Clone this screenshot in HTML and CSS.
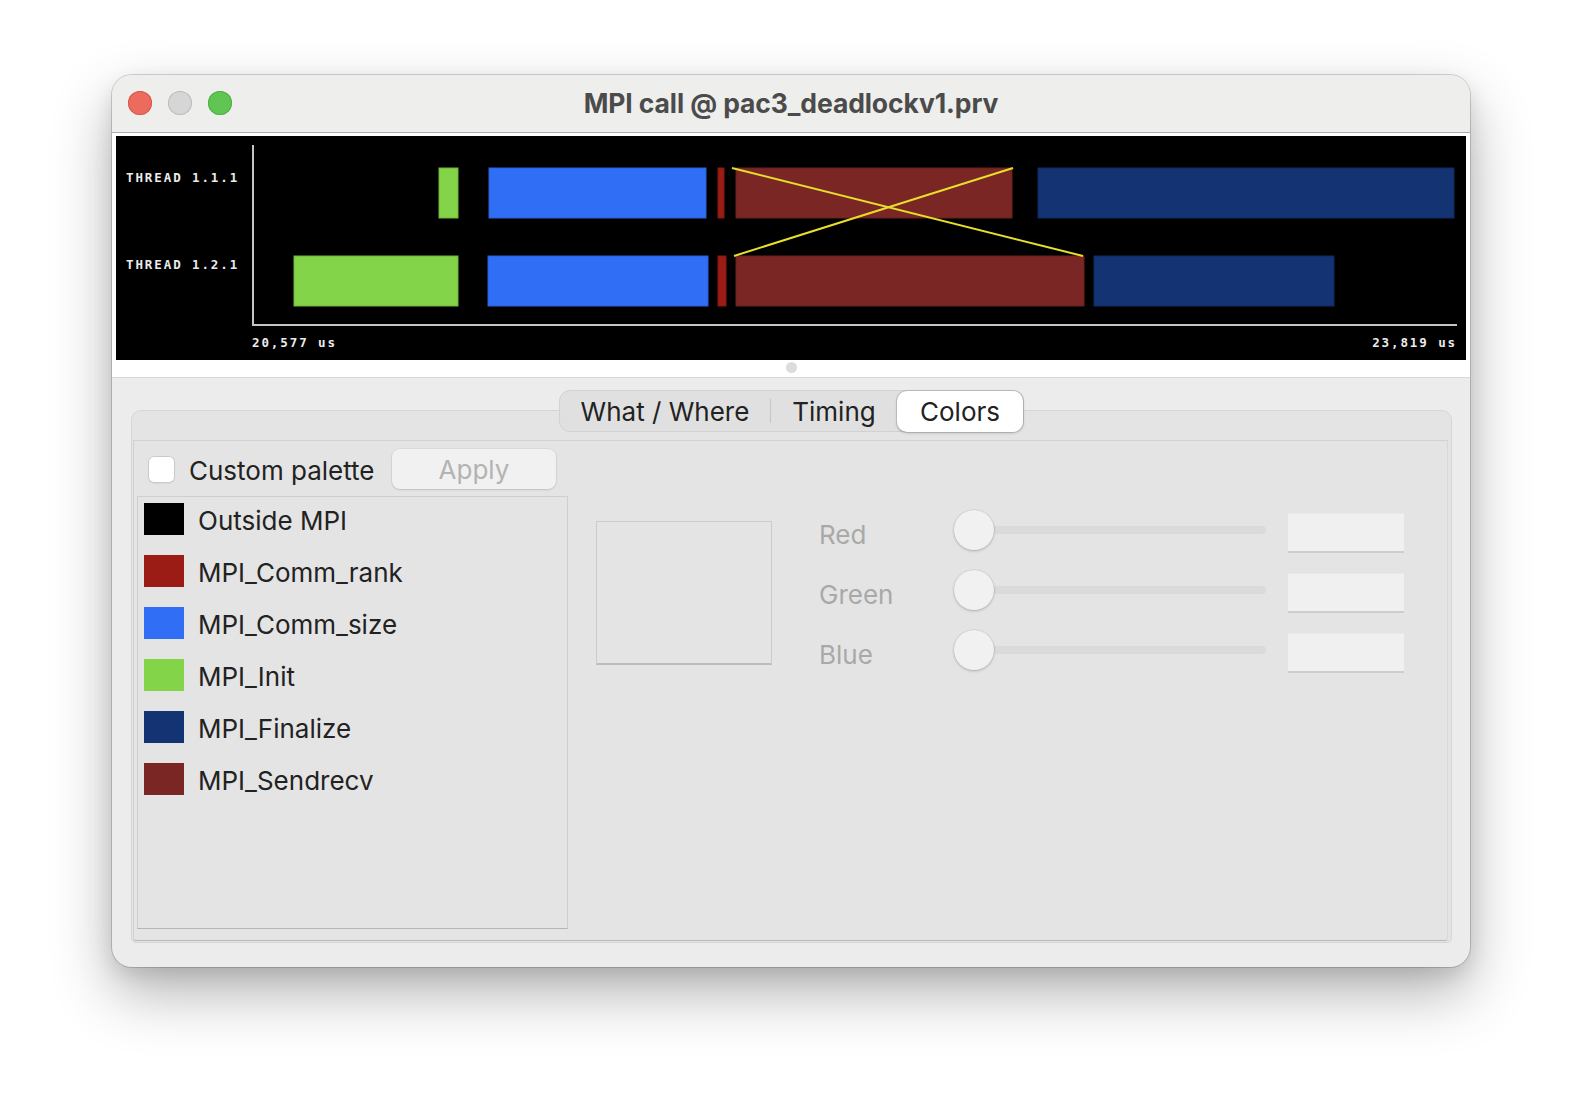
FILE: index.html
```html
<!DOCTYPE html>
<html>
<head>
<meta charset="utf-8">
<title>MPI call @ pac3_deadlockv1.prv</title>
<link rel="stylesheet" href="styles.css">
</head>
<body>
<div class="stage">
  <div class="window">
    <div class="titlebar">
      <div class="lights">
        <span class="light red"></span>
        <span class="light gray"></span>
        <span class="light green"></span>
      </div>
      <div class="title">MPI call @ pac3_deadlockv1.prv</div>
      <div></div>
    </div>

    <div class="canvas-wrap">
      <svg class="timeline" width="1350" height="224" viewBox="0 0 1350 224">
        <rect x="0" y="0" width="1350" height="224" fill="#000"/>
        <text class="tl-label" x="10" y="46">THREAD 1.1.1</text>
        <text class="tl-label" x="10" y="133">THREAD 1.2.1</text>
        <line x1="137" y1="9" x2="137" y2="190" stroke="#c4c4c4" stroke-width="2"/>
        <line x1="136" y1="189" x2="1341" y2="189" stroke="#c4c4c4" stroke-width="2"/>

        <rect class="b-init" x="323" y="32" width="19" height="50"/>
        <rect class="b-size" x="373" y="32" width="217" height="50"/>
        <rect class="b-rank" x="602" y="32" width="6" height="50"/>
        <rect class="b-send" x="620" y="32" width="276" height="50"/>
        <rect class="b-fin" x="922" y="32" width="416" height="50"/>

        <rect class="b-init" x="178" y="120" width="164" height="50"/>
        <rect class="b-size" x="372" y="120" width="220" height="50"/>
        <rect class="b-rank" x="602" y="120" width="8" height="50"/>
        <rect class="b-send" x="620" y="120" width="348" height="50"/>
        <rect class="b-fin" x="978" y="120" width="240" height="50"/>

        <line x1="616" y1="32" x2="967" y2="120" stroke="#e6df2c" stroke-width="2"/>
        <line x1="897" y1="32" x2="618" y2="120" stroke="#e6df2c" stroke-width="2"/>

        <text class="tl-label" x="136" y="211">20,577 us</text>
        <text class="tl-label" x="1341" y="211" text-anchor="end">23,819 us</text>
      </svg>
    </div>

    <div class="sash"><span class="grip"></span></div>

    <div class="panel">
      <div class="tabs">
        <div class="seg seg-what">What / Where</div>
        <div class="sep"></div>
        <div class="seg seg-timing">Timing</div>
        <div class="seg seg-colors active">Colors</div>
      </div>
      <div class="groupbox">
        <div class="page">
          <div class="left">
            <div class="palette-row">
              <span class="checkbox"></span>
              <span class="palette-label">Custom palette</span>
              <span class="apply">Apply</span>
            </div>
            <div class="list">
              <div class="item"><span class="swatch sw-out"></span><span class="item-name">Outside MPI</span></div>
              <div class="item"><span class="swatch sw-rank"></span><span class="item-name">MPI_Comm_rank</span></div>
              <div class="item"><span class="swatch sw-size"></span><span class="item-name">MPI_Comm_size</span></div>
              <div class="item"><span class="swatch sw-init"></span><span class="item-name">MPI_Init</span></div>
              <div class="item"><span class="swatch sw-fin"></span><span class="item-name">MPI_Finalize</span></div>
              <div class="item"><span class="swatch sw-send"></span><span class="item-name">MPI_Sendrecv</span></div>
            </div>
          </div>
          <div class="editor">
            <div class="preview"></div>
            <div class="sliders">
              <div class="srow">
                <span class="slabel">Red</span>
                <div class="slider"><span class="knob"></span></div>
                <span class="field"></span>
              </div>
              <div class="srow">
                <span class="slabel">Green</span>
                <div class="slider"><span class="knob"></span></div>
                <span class="field"></span>
              </div>
              <div class="srow">
                <span class="slabel">Blue</span>
                <div class="slider"><span class="knob"></span></div>
                <span class="field"></span>
              </div>
            </div>
          </div>
        </div>
      </div>
    </div>
  </div>
</div>
</body>
</html>
```

FILE: styles.css
```css
* { box-sizing: border-box; }
html, body { margin: 0; padding: 0; background: #ffffff; }
body {
  font-family: "Inter", "Noto Sans", "Liberation Sans", sans-serif;
  width: 1582px;
  height: 1116px;
  overflow: hidden;
}
.stage {
  padding: 75px 0 0 112px;
}
.window {
  width: 1358px;
  height: 892px;
  border-radius: 20px;
  overflow: hidden;
  background: #ececec;
  box-shadow: 0 0 0 1px rgba(0,0,0,0.16), 0 26px 60px rgba(0,0,0,0.30), 0 8px 20px rgba(0,0,0,0.10);
  display: flex;
  flex-direction: column;
}

/* title bar */
.titlebar {
  height: 58px;
  flex: 0 0 58px;
  background: #eeeeed;
  border-bottom: 1px solid #acacac;
  display: grid;
  grid-template-columns: 1fr auto 1fr;
  align-items: center;
}
.lights {
  display: flex;
  gap: 16px;
  padding-left: 16px;
  padding-bottom: 1px;
}
.light {
  width: 24px;
  height: 24px;
  border-radius: 50%;
  display: block;
}
.light.red { background: #ec6a5e; box-shadow: inset 0 0 0 1px #d65a4f; }
.light.gray { background: #d6d6d6; box-shadow: inset 0 0 0 1px #bdbdbd; }
.light.green { background: #61c554; box-shadow: inset 0 0 0 1px #52ad46; }
.title {
  font-size: 26.5px;
  font-weight: 700;
  color: #4b4b4b;
  letter-spacing: -0.1px;
  padding-bottom: 2px;
}

/* canvas */
.canvas-wrap {
  background: #ffffff;
  padding: 3px 4px 0 4px;
  line-height: 0;
}
.timeline { display: block; }
.tl-label {
  font-family: "DejaVu Sans Mono", "Liberation Mono", monospace;
  font-weight: 700;
  font-size: 12.5px;
  letter-spacing: 1.9px;
  fill: #ececec;
}
.b-init { fill: #84d44a; stroke: #6fb53c; stroke-width: 1; }
.b-size { fill: #306ff5; stroke: #2a61d6; stroke-width: 1; }
.b-rank { fill: #9b1c14; stroke: #861810; stroke-width: 1; }
.b-send { fill: #792624; stroke: #6a2120; stroke-width: 1; }
.b-fin { fill: #133372; stroke: #0f2b63; stroke-width: 1; }

/* sash */
.sash {
  height: 18px;
  flex: 0 0 18px;
  background: #ffffff;
  border-bottom: 1px solid #d9d9d9;
  display: flex;
  justify-content: center;
  align-items: flex-start;
  padding-top: 2px;
}
.grip {
  width: 11px;
  height: 11px;
  border-radius: 50%;
  background: #dcdcdc;
  display: block;
}

/* panel */
.panel {
  flex: 1;
  padding: 12px 18px 23px 19px;
  display: flex;
  flex-direction: column;
}
.tabs {
  align-self: center;
  height: 42px;
  display: flex;
  align-items: center;
  background: #e0e0e0;
  border: 1px solid #d2d2d2;
  border-radius: 11px;
  position: relative;
  z-index: 1;
  font-size: 26px;
  color: #222222;
}
.seg {
  height: 40px;
  display: flex;
  align-items: center;
  justify-content: center;
}
.seg-what { width: 210px; }
.seg-timing { width: 126px; }
.seg-colors { width: 126px; }
.sep {
  width: 1px;
  height: 24px;
  background: #c6c6c6;
}
.seg.active {
  background: #ffffff;
  border-radius: 10px;
  height: 41px;
  box-shadow: 0 0 0 1px rgba(0,0,0,0.10), 0 1px 3px rgba(0,0,0,0.22);
}
.groupbox {
  margin-top: -22px;
  height: 533px;
  background: #e4e4e4;
  border: 1px solid #d6d6d6;
  border-radius: 10px 10px 5px 5px;
  padding: 29px 3px 1px 1px;
  display: flex;
}
.page {
  flex: 1;
  border: 1px solid #d2d2d2;
  border-bottom: 1px solid #b9b9b9;
  border-right-color: #d8d8d8;
  background: #e4e4e4;
  display: flex;
  border-radius: 0 0 3px 3px;
}

/* left column */
.left {
  width: 434px;
  padding-left: 3px;
  padding-top: 8px;
  display: flex;
  flex-direction: column;
}
.palette-row {
  height: 40px;
  display: flex;
  align-items: center;
  padding-left: 11px;
}
.checkbox {
  width: 27px;
  height: 27px;
  border-radius: 6px;
  background: #ffffff;
  box-shadow: inset 0 0 0 1px #c9c9c9, 0 1px 1px rgba(0,0,0,0.05);
  display: block;
  flex: 0 0 27px;
}
.palette-label {
  margin-left: 14px;
  flex: 0 0 203px;
  font-size: 26px;
  color: #222222;
  padding-top: 2px;
}
.apply {
  width: 164px;
  height: 40px;
  border-radius: 8px;
  background: #f1f1f1;
  box-shadow: 0 0 0 1px rgba(0,0,0,0.04), 0 1px 2px rgba(0,0,0,0.12);
  display: flex;
  align-items: center;
  justify-content: center;
  font-size: 26px;
  color: #b3b3b3;
}
.list {
  margin-top: 7px;
  width: 431px;
  height: 433px;
  border: 1px solid #cfcfcf;
  border-bottom-color: #b5b5b5;
  background: #e4e4e4;
  padding: 6px 0 0 6px;
  display: flex;
  flex-direction: column;
  gap: 20px;
}
.item {
  height: 32px;
  display: flex;
  align-items: center;
}
.swatch {
  width: 40px;
  height: 32px;
  display: block;
  flex: 0 0 40px;
}
.sw-out { background: #000000; }
.sw-rank { background: #9b1c14; }
.sw-size { background: #306ff5; }
.sw-init { background: #84d44a; }
.sw-fin { background: #133372; }
.sw-send { background: #792624; }
.item-name {
  margin-left: 14px;
  font-size: 26px;
  color: #222222;
  padding-top: 2px;
}

/* editor */
.editor {
  display: flex;
  align-items: flex-start;
  padding-top: 72px;
  padding-left: 28px;
}
.preview {
  margin-top: 8px;
  width: 176px;
  height: 144px;
  border: 1px solid #cbcbcb;
  border-bottom: 2px solid #bdbdbd;
  background: #e4e4e4;
}
.sliders {
  margin-left: 47px;
  display: flex;
  flex-direction: column;
  gap: 20px;
}
.srow {
  height: 40px;
  display: flex;
  align-items: center;
}
.slabel {
  width: 135px;
  font-size: 26px;
  color: #a9a9a9;
  padding-top: 3px;
}
.slider {
  width: 312px;
  height: 40px;
  margin-top: -6px;
  position: relative;
  display: flex;
  align-items: center;
}
.slider::before {
  content: "";
  position: absolute;
  left: 0;
  right: 0;
  top: 16px;
  height: 8px;
  border-radius: 4px;
  background: #dadada;
}
.knob {
  width: 40px;
  height: 40px;
  border-radius: 50%;
  background: #f1f1f1;
  box-shadow: 0 1px 3px rgba(0,0,0,0.22), 0 0 0 0.5px rgba(0,0,0,0.08);
  position: relative;
  display: block;
}
.field {
  margin-left: 22px;
  width: 116px;
  height: 40px;
  background: #f0f0f0;
  border-top: 1px solid #e8e8e8;
  border-bottom: 2px solid #cdcdcd;
  display: block;
}
```
